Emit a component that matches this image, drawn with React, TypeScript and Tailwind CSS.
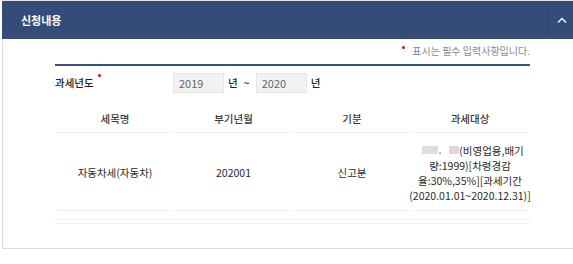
import React from "react";

const font = { fontFamily: '"Noto Sans CJK KR", "Noto Sans", sans-serif' };

export default function App() {
  return (
    <div className="w-[573px] h-[264px] bg-white overflow-hidden" style={font}>
      <div className="ml-[2px] w-[580px] border-t border-[#e3e3e3]">
        {/* header */}
        <div className="h-[38px] bg-[#344c78] flex items-center">
          <div className="pl-[19px] text-white text-[11px] font-bold flex-1 leading-none">신청내용</div>
          <div className="w-px h-[26px] bg-[#2c4168]" />
          <div className="w-[34px] flex justify-center pr-[6px]">
            <svg width="10" height="7" viewBox="0 0 10 7">
              <polyline points="1,5.5 5,1.5 9,5.5" fill="none" stroke="#ffffff" strokeWidth="1.4" />
            </svg>
          </div>
        </div>
        {/* body */}
        <div className="border-l border-b border-[#dcdcdc] h-[210px] pl-[52px]">
          <div className="w-[475px]">
            <div className="h-[25px] flex justify-end items-start pt-[6px]">
              <div className="flex items-start">
                <span className="w-[3px] h-[3px] rounded-full bg-[#e60012] mt-[1px] mr-[7px]" />
                <span className="text-[10px] leading-[12px] text-[#8a8a8a]">표시는 필수 입력사항입니다.</span>
              </div>
            </div>
            <div className="h-[2px] bg-[#3b5280]" />
            <div className="h-[34px] flex items-center">
              <div className="w-[118px] flex items-start text-[10.5px] text-[#222] font-medium">
                <span>과세년도</span>
                <span className="w-[3px] h-[3px] rounded-full bg-[#e60012] ml-[4px] mt-[-1px]" />
              </div>
              <div className="w-[51px] h-[20px] bg-[#f2f2f2] border border-[#e6e6e6] flex items-center pl-[5px] text-[11px] text-[#666]">2019</div>
              <span className="ml-[4px] text-[10.5px] text-[#222] font-medium">년</span>
              <span className="ml-[6px] text-[10.5px] text-[#222] font-medium">~</span>
              <div className="ml-[6px] w-[51px] h-[20px] bg-[#f2f2f2] border border-[#e6e6e6] flex items-center pl-[5px] text-[11px] text-[#666]">2020</div>
              <span className="ml-[4px] text-[10.5px] text-[#222] font-medium">년</span>
            </div>
            <div className="h-[5px]" />
            <div className="ml-[2px] grid grid-cols-[116px_117px_116px_116px] gap-x-[2px] text-[10.5px] text-[#2a2a2a]">
              <div className="h-[28px] border-b border-[#f0f0f0] flex items-center justify-center text-[#3a3a3a] font-medium">세목명</div>
              <div className="h-[28px] border-b border-[#f0f0f0] flex items-center justify-center text-[#3a3a3a] font-medium">부기년월</div>
              <div className="h-[28px] border-b border-[#f0f0f0] flex items-center justify-center text-[#3a3a3a] font-medium">기분</div>
              <div className="h-[28px] border-b border-[#f0f0f0] flex items-center justify-center text-[#3a3a3a] font-medium">과세대상</div>
              <div className="h-[78px] border-b border-[#f0f0f0] flex items-center justify-center pt-[2px]">자동차세(자동차)</div>
              <div className="h-[78px] border-b border-[#f0f0f0] flex items-center justify-center pt-[2px]">202001</div>
              <div className="h-[78px] border-b border-[#f0f0f0] flex items-center justify-center pt-[2px]">신고분</div>
              <div className="h-[78px] border-b border-[#f0f0f0] flex flex-col items-center justify-center leading-[15px] whitespace-nowrap pt-[2px]">
                <div className="flex items-center pl-[6px]">
                  <span className="w-[16px] h-[8px] bg-[#dedede]" />
                  <span className="w-[2px] h-[2px] bg-[#bbb] ml-[1px] mt-[6px]" />
                  <span className="w-[10px] h-[8px] bg-[#ddd6e2] ml-[8px]" />
                  <span>(비영업용,배기</span>
                </div>
                <div>량:1999)[차령경감</div>
                <div>율:30%,35%][과세기간</div>
                <div>(2020.01.01~2020.12.31)]</div>
              </div>
            </div>
            <div className="mt-[8px] h-px bg-[#f0f0f0]" />
            <div className="mt-[3px] h-px bg-[#f0f0f0]" />
          </div>
        </div>
      </div>
    </div>
  );
}
